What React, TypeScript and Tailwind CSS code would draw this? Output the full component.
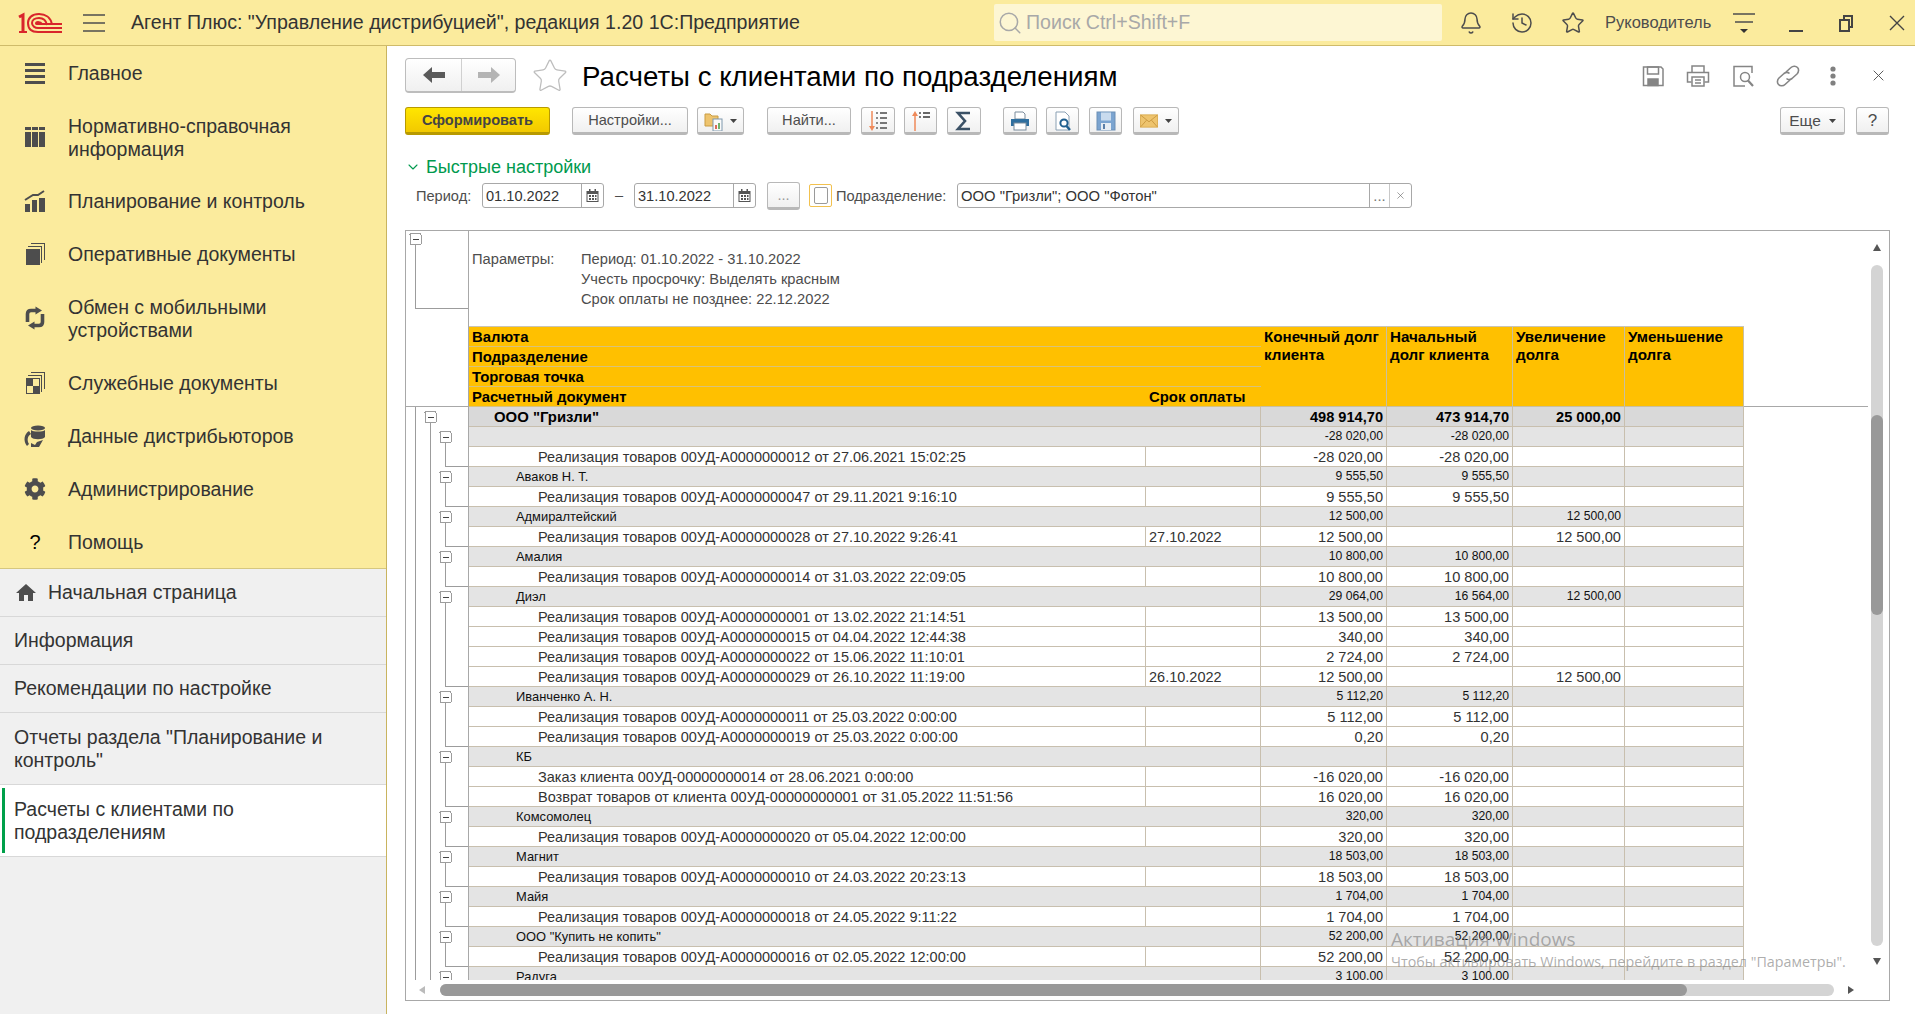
import { Bell, History, Star, Search, ChevronDown } from "lucide-react";
import { FaCog } from "react-icons/fa";
import { MdHome } from "react-icons/md";
import type { ReactNode } from "react";

// ─── Report rows: kind, name, due date, four amounts ─────────────────────────
type Row = [kind: "top" | "group" | "doc", name: string, date: string, end: string, start: string, inc: string, dec: string];

const real = (n: string, d: string) => `Реализация товаров 00УД-А00000000${n} от ${d}`;

const ROWS: Row[] = [
  ["top", 'ООО "Гризли"', "", "498 914,70", "473 914,70", "25 000,00", ""],
  ["group", "", "", "-28 020,00", "-28 020,00", "", ""],
  ["doc", real("12", "27.06.2021 15:02:25"), "", "-28 020,00", "-28 020,00", "", ""],
  ["group", "Аваков Н. Т.", "", "9 555,50", "9 555,50", "", ""],
  ["doc", real("47", "29.11.2021 9:16:10"), "", "9 555,50", "9 555,50", "", ""],
  ["group", "Адмиралтейский", "", "12 500,00", "", "12 500,00", ""],
  ["doc", real("28", "27.10.2022 9:26:41"), "27.10.2022", "12 500,00", "", "12 500,00", ""],
  ["group", "Амалия", "", "10 800,00", "10 800,00", "", ""],
  ["doc", real("14", "31.03.2022 22:09:05"), "", "10 800,00", "10 800,00", "", ""],
  ["group", "Диэл", "", "29 064,00", "16 564,00", "12 500,00", ""],
  ["doc", real("01", "13.02.2022 21:14:51"), "", "13 500,00", "13 500,00", "", ""],
  ["doc", real("15", "04.04.2022 12:44:38"), "", "340,00", "340,00", "", ""],
  ["doc", real("22", "15.06.2022 11:10:01"), "", "2 724,00", "2 724,00", "", ""],
  ["doc", real("29", "26.10.2022 11:19:00"), "26.10.2022", "12 500,00", "", "12 500,00", ""],
  ["group", "Иванченко А. Н.", "", "5 112,20", "5 112,20", "", ""],
  ["doc", real("11", "25.03.2022 0:00:00"), "", "5 112,00", "5 112,00", "", ""],
  ["doc", real("19", "25.03.2022 0:00:00"), "", "0,20", "0,20", "", ""],
  ["group", "КБ", "", "", "", "", ""],
  ["doc", "Заказ клиента 00УД-00000000014 от 28.06.2021 0:00:00", "", "-16 020,00", "-16 020,00", "", ""],
  ["doc", "Возврат товаров от клиента 00УД-00000000001 от 31.05.2022 11:51:56", "", "16 020,00", "16 020,00", "", ""],
  ["group", "Комсомолец", "", "320,00", "320,00", "", ""],
  ["doc", real("20", "05.04.2022 12:00:00"), "", "320,00", "320,00", "", ""],
  ["group", "Магнит", "", "18 503,00", "18 503,00", "", ""],
  ["doc", real("10", "24.03.2022 20:23:13"), "", "18 503,00", "18 503,00", "", ""],
  ["group", "Майя", "", "1 704,00", "1 704,00", "", ""],
  ["doc", real("18", "24.05.2022 9:11:22"), "", "1 704,00", "1 704,00", "", ""],
  ["group", 'ООО "Купить не копить"', "", "52 200,00", "52 200,00", "", ""],
  ["doc", real("16", "02.05.2022 12:00:00"), "", "52 200,00", "52 200,00", "", ""],
  ["group", "Радуга", "", "3 100,00", "3 100,00", "", ""],
];

// ─── Sidebar icons ───────────────────────────────────────────────────────────
const ICON = "#4d4d4d";

function IconMain() {
  return (
    <svg width="24" height="24" viewBox="0 0 24 24" fill={ICON}>
      <rect x="2" y="2" width="20" height="3" />
      <rect x="2" y="8" width="20" height="3" />
      <rect x="2" y="14" width="20" height="3" />
      <rect x="2" y="20" width="20" height="3" />
    </svg>
  );
}

function IconTable() {
  return (
    <svg width="24" height="24" viewBox="0 0 24 24" fill={ICON}>
      <rect x="2" y="2" width="6" height="3" />
      <rect x="9" y="2" width="6" height="3" />
      <rect x="16" y="2" width="6" height="3" />
      <rect x="2" y="7" width="6" height="15" />
      <rect x="9" y="7" width="6" height="15" />
      <rect x="16" y="7" width="6" height="15" />
    </svg>
  );
}

function IconPlan() {
  return (
    <svg width="24" height="24" viewBox="0 0 24 24" fill={ICON}>
      <rect x="2" y="15" width="5" height="8" />
      <rect x="9" y="11" width="5" height="12" />
      <rect x="16" y="9" width="6" height="14" />
      <path d="M2 11 L10 6 L15 6 L21 2" fill="none" stroke={ICON} strokeWidth="2" />
    </svg>
  );
}

function IconDocs({ square }: { square?: boolean }) {
  return (
    <svg width="24" height="24" viewBox="0 0 24 24" fill={ICON}>
      <path d="M8 1 H22 V18 H21 V2 H8 Z" />
      <path d="M5 4 H19 V21 H18 V5 H5 Z" />
      <rect x="3" y="7" width="14" height="16" />
      {square && <rect x="10" y="8" width="6" height="7" fill="#fbeb9d" />}
      {square && <rect x="4" y="15" width="6" height="7" fill="#fbeb9d" />}
    </svg>
  );
}

function IconExchange() {
  return (
    <svg width="24" height="24" viewBox="0 0 24 24" fill={ICON}>
      <path d="M4.5 16 V8 Q4.5 4.5 8 4.5 H13" fill="none" stroke={ICON} strokeWidth="3.6" />
      <path d="M12.5 0.5 L19 4.5 L12.5 8.5 Z" />
      <path d="M19.5 8 V16 Q19.5 19.5 16 19.5 H11" fill="none" stroke={ICON} strokeWidth="3.6" />
      <path d="M11.5 15.5 L5 19.5 L11.5 23.5 Z" />
    </svg>
  );
}

function IconDistrib() {
  return (
    <svg width="24" height="24" viewBox="0 0 24 24" fill={ICON}>
      <ellipse cx="15" cy="4" rx="7" ry="2.5" />
      <path d="M8 6 C10 8 20 8 22 6 V13 C20 16 10 16 8 13 Z" />
      <path d="M6 7 C1 10 0 17 4 22 L6 20 C4 17 4 12 8 10 Z" />
      <path d="M8 23 L16 23 L20 16 L14 18 L12 21 L8 19 Z" />
    </svg>
  );
}

// ─── Header and title row drawings ───────────────────────────────────────────
function Logo() {
  return (
    <svg width="44" height="22" viewBox="0 0 44 22" fill="none" stroke="#d9252b" strokeWidth="2">
      <path d="M1 5 L5 3 V20" strokeWidth="3" />
      <path d="M1 20 H9" strokeWidth="2" />
      <path d="M34 13 C33 5 27 2 21 2 C14 2 10 6 10 11 C10 17 14 20 20 20 H44" />
      <path d="M29 13 C28 8 25 6 21 6 C17 6 14 8 14 11 C14 14 17 16 20 16 H44" />
      <path d="M24 12 C23 10 22 10 20 10 C18 10 18 11 18 11.5 C18 12 19 12 20 12 H44" />
    </svg>
  );
}

function Hamburger() {
  return (
    <svg width="22" height="18" viewBox="0 0 22 18" stroke="#4d4d4d" strokeWidth="1.5">
      <path d="M0 1 H22 M0 9 H22 M0 17 H22" />
    </svg>
  );
}

function FunctionsMenu() {
  return (
    <svg width="24" height="24" viewBox="0 0 24 24" stroke="#4d4d4d" strokeWidth="1.5">
      <path d="M1 3 H23 M3 11 H21" />
      <path d="M8 18 H16 L12 22 Z" fill="#333" stroke="none" />
    </svg>
  );
}

function WindowMin() {
  return (
    <svg width="16" height="24" viewBox="0 0 16 24">
      <rect x="1" y="19" width="14" height="2" fill="#444" />
    </svg>
  );
}

function WindowRestore() {
  return (
    <svg width="16" height="24" viewBox="0 0 16 24" fill="none" stroke="#444" strokeWidth="2">
      <rect x="2" y="9" width="9" height="11" />
      <path d="M6 9 V5 H14 V16 H11" />
    </svg>
  );
}

function WindowClose({ size = 16, color = "#444" }: { size?: number; color?: string }) {
  return (
    <svg width={size} height={size} viewBox="0 0 16 16" stroke={color} strokeWidth="1.4">
      <path d="M1 1 L15 15 M15 1 L1 15" />
    </svg>
  );
}

function GraySave() {
  return (
    <svg width="24" height="24" viewBox="0 0 24 24" fill="none" stroke="#858585" strokeWidth="1.5">
      <path d="M2.5 3 H20 L22 5 V21.5 H2.5 Z" />
      <rect x="6.5" y="3" width="11" height="7" />
      <rect x="7" y="15" width="10" height="6.5" fill="#858585" />
    </svg>
  );
}

function GrayPrint() {
  return (
    <svg width="24" height="24" viewBox="0 0 24 24" fill="none" stroke="#858585" strokeWidth="1.5">
      <path d="M6 8 V2 H18 V8" />
      <path d="M5.5 18 H1.5 V8.5 H22.5 V18 H18.5" />
      <rect x="6" y="13" width="12" height="9" />
      <path d="M9 16 H15 M9 19 H15" />
    </svg>
  );
}

function GrayPreview() {
  return (
    <svg width="24" height="24" viewBox="0 0 24 24" fill="none" stroke="#858585" strokeWidth="1.5">
      <path d="M21 9 V2.5 H3 V22 H14" />
      <circle cx="14" cy="13" r="4.5" />
      <path d="M17 16.5 L22 22" strokeWidth="2.2" />
    </svg>
  );
}

function GrayLink() {
  return (
    <svg width="24" height="24" viewBox="0 0 24 24" fill="none" stroke="#858585" strokeWidth="1.6">
      <path d="M10 8 L15 3.5 C17 1.5 20 2 21.5 3.5 C23 5 23 8 21 10 L16 14.5 C14 16 12 16 10.5 14.5" />
      <path d="M14 16 L9 20.5 C7 22.5 4 22 2.5 20.5 C1 19 1 16 3 14 L8 9.5 C10 8 12 8 13.5 9.5" />
    </svg>
  );
}

function GrayDots() {
  return (
    <svg width="24" height="24" viewBox="0 0 24 24" fill="#808080">
      <circle cx="12" cy="5" r="2.6" />
      <circle cx="12" cy="12" r="2.6" />
      <circle cx="12" cy="19" r="2.6" />
    </svg>
  );
}

function NavArrow({ dir, color }: { dir: "left" | "right"; color: string }) {
  return (
    <svg width="22" height="16" viewBox="0 0 22 16" fill={color}>
      {dir === "left" ? <path d="M0 8 L9 0 V5 H22 V11 H9 V16 Z" /> : <path d="M22 8 L13 0 V5 H0 V11 H13 V16 Z" />}
    </svg>
  );
}

// ─── Toolbar drawings ────────────────────────────────────────────────────────
function DropCaret() {
  return (
    <svg width="7" height="4" viewBox="0 0 7 4" fill="#444">
      <path d="M0 0 H7 L3.5 4 Z" />
    </svg>
  );
}

function ToolFolder() {
  return (
    <svg width="20" height="20" viewBox="0 0 20 20">
      <path d="M1 3 H6 L8 5 H14 V15 H1 Z" fill="#eec46e" stroke="#c99c43" />
      <rect x="9" y="8" width="9" height="12" fill="#fafafa" stroke="#7f98ad" />
      <rect x="11" y="14" width="2" height="4" fill="#d96a5a" />
      <rect x="14" y="12" width="2" height="6" fill="#6fb36f" />
    </svg>
  );
}

function ToolSortDown() {
  return (
    <svg width="20" height="22" viewBox="0 0 20 22" fill="none">
      <path d="M4 1 V19" stroke="#ef8a5a" strokeWidth="1.5" />
      <path d="M1 16 L4 21 L7 16 Z" fill="#ef8a5a" />
      <path d="M8 3 H10 M8 8 H10 M8 13 H10 M8 18 H10" stroke="#8a8a8a" strokeWidth="2" />
      <path d="M12 3 H19 M12 8 H19 M12 13 H19 M12 18 H19" stroke="#777" strokeWidth="2" />
    </svg>
  );
}

function ToolSortUp() {
  return (
    <svg width="20" height="22" viewBox="0 0 20 22" fill="none">
      <path d="M4 3 V21" stroke="#ef8a5a" strokeWidth="1.5" />
      <path d="M1 6 L4 1 L7 6 Z" fill="#ef8a5a" />
      <path d="M8 3 H10 M8 7 H10" stroke="#777" strokeWidth="2" />
      <path d="M12 3 H19 M12 7 H19" stroke="#666" strokeWidth="2" />
    </svg>
  );
}

function ToolSigma() {
  return (
    <svg width="18" height="22" viewBox="0 0 18 22" fill="none" stroke="#3b5166" strokeWidth="2.6">
      <path d="M15 3 H3 L10 11 L3 19 H15" />
    </svg>
  );
}

function ToolPrint() {
  return (
    <svg width="20" height="20" viewBox="0 0 20 20">
      <path d="M5 1 H13 L15 3 V8 H5 Z" fill="#fff" stroke="#7a8c9c" />
      <path d="M1 8 H19 V15 H1 Z" fill="#2f6f9f" />
      <rect x="4" y="12" width="12" height="7" fill="#fff" stroke="#7a8c9c" />
    </svg>
  );
}

function ToolPreview() {
  return (
    <svg width="20" height="20" viewBox="0 0 20 20">
      <path d="M3 1 H12 L16 5 V19 H3 Z" fill="#fff" stroke="#8aa0b3" />
      <circle cx="11" cy="12" r="3.6" fill="none" stroke="#1f5f8f" strokeWidth="2" />
      <path d="M13.5 15 L17 19" stroke="#1f5f8f" strokeWidth="2.4" />
    </svg>
  );
}

function ToolSave() {
  return (
    <svg width="20" height="20" viewBox="0 0 20 20">
      <rect x="1" y="1" width="18" height="18" fill="#7ba4d0" stroke="#6d8fb5" />
      <rect x="5" y="1.5" width="10" height="8" fill="#c9dbee" />
      <rect x="5" y="12" width="10" height="7" fill="#e7edf3" />
      <rect x="7" y="13" width="2" height="5" fill="#5b7fa8" />
    </svg>
  );
}

function ToolMail() {
  return (
    <svg width="18" height="14" viewBox="0 0 22 16">
      <rect x="0.5" y="0.5" width="21" height="15" fill="#eec46e" stroke="#d8a848" />
      <path d="M1 1 L11 9 L21 1 M1 15 L8 7 M21 15 L14 7" fill="none" stroke="#c4923a" />
    </svg>
  );
}

function Calendar() {
  return (
    <svg width="13" height="13" viewBox="0 0 13 13" fill="#555">
      <path d="M3 0 H4.5 V2 H8.5 V0 H10 V2 H12.5 V13 H0.5 V2 H3 Z M1.5 5 V12 H11.5 V5 Z" />
      <path d="M3 6 H5 V8 H3 Z M6 6 H8 V8 H6 Z M9 6 H10.5 V8 H9 Z M3 9 H5 V11 H3 Z M6 9 H8 V11 H6 Z M9 9 H10.5 V11 H9 Z" />
    </svg>
  );
}

// ─── Small pieces ────────────────────────────────────────────────────────────
function NavItem({ icon, children, className }: { icon: ReactNode; children: ReactNode; className: string }) {
  return (
    <div className={`flex items-center pl-[23px] ${className}`}>
      <div className="w-6 h-6 flex items-center justify-center shrink-0">{icon}</div>
      <div className="ml-[21px] pt-[2px] text-[19.5px] leading-[23px] text-[#333]">{children}</div>
    </div>
  );
}

function Btn({ className, children }: { className: string; children: ReactNode }) {
  return (
    <div
      className={`h-[28px] flex items-center justify-center shrink-0 rounded-[3px] border border-[#b8b8b8] border-b-[3px] bg-linear-to-b from-white to-[#f0f0f0] pt-[2px] text-[14.6px] text-[#4d4d4d] ${className}`}
    >
      {children}
    </div>
  );
}

function DateInput({ value }: { value: string }) {
  return (
    <div className="w-[122px] h-[25px] flex rounded-[3px] border border-[#a8a8a8] bg-white shrink-0">
      <div className="w-[99px] border-r border-[#a8a8a8] pl-[3px] text-[14.6px] leading-[24px] text-[#333]">{value}</div>
      <div className="flex-1 flex items-center justify-center">
        <Calendar />
      </div>
    </div>
  );
}

function TreeBox({ x }: { x: number }) {
  return (
    <>
      <rect x={x - 5.5} y="4.5" width="11" height="11" rx="1" fill="#fff" stroke="#9c9c9c" />
      <path d={`M${x - 3} 10 H${x + 3}`} stroke="#444" strokeWidth="1" />
    </>
  );
}

function TreeGutter({ kind, last }: { kind: Row[0]; last: boolean }) {
  return (
    <div className="w-[63px] h-5 border-r border-[#a8a8a8] shrink-0">
      <svg width="62" height="20" viewBox="0 0 62 20" fill="none" stroke="#9c9c9c" shapeRendering="crispEdges">
        <path d="M9.5 0 V20" />
        {kind === "top" && (
          <>
            <path d="M24.5 15 V20" />
            <TreeBox x={24.5} />
          </>
        )}
        {kind !== "top" && <path d="M24.5 0 V20" />}
        {kind === "group" && (
          <>
            <path d="M39.5 15 V20" />
            <TreeBox x={39.5} />
          </>
        )}
        {kind === "doc" && <path d={last ? "M39.5 0 V19.5 H62" : "M39.5 0 V20"} />}
      </svg>
    </div>
  );
}

function ReportRow({ row, last }: { row: Row; last: boolean }) {
  const [kind, name, date, end, start, inc, dec] = row;
  const bg = kind === "top" ? "bg-[#d9d9d9]" : kind === "group" ? "bg-[#e4e4e4]" : "bg-white";
  const nameText =
    kind === "top"
      ? "text-[14.9px] font-bold text-black leading-[21px]"
      : kind === "group"
        ? "text-[12.9px] text-[#111] leading-[19px]"
        : "text-[14.5px] text-[#333] leading-[21px]";
  const numText =
    kind === "top"
      ? "text-[14.6px] font-bold text-black leading-[21px]"
      : kind === "group"
        ? "text-[12.2px] text-[#111] leading-[19px]"
        : "text-[14.6px] text-[#333] leading-[21px]";
  const cell = `h-5 border-b border-r border-[#c8bfae] overflow-hidden whitespace-nowrap ${bg}`;
  const pad = kind === "top" ? "pl-[25px]" : kind === "group" ? "pl-[47px]" : "pl-[69px]";
  const num = `${cell} ${numText} text-right pr-[3px]`;

  return (
    <div className="flex">
      <TreeGutter kind={kind} last={last} />
      <div className="grid grid-cols-[677px_115px_126px_126px_112px_119px]">
        {kind === "doc" ? (
          <>
            <div className={`${cell} ${nameText} ${pad}`}>{name}</div>
            <div className={`${cell} ${nameText} pl-[3px]`}>{date}</div>
          </>
        ) : (
          <div className={`${cell} ${nameText} ${pad} col-span-2`}>{name}</div>
        )}
        <div className={num}>{end}</div>
        <div className={num}>{start}</div>
        <div className={num}>{inc}</div>
        <div className={num}>{dec}</div>
      </div>
    </div>
  );
}

function ReportHeader() {
  const strip = "h-5 pl-[3px] bg-[#ffc000] border-b border-[#d8c27a] text-[14.9px] font-bold leading-[21px] text-black";
  const col = "row-span-4 bg-[#ffc000] border-r border-b border-[#c9bf9f] pl-[3px] pt-[1px] text-[15.2px] font-bold leading-[18px] text-black";
  return (
    <div className="flex border-b border-[#a8a8a8] h-20">
      <div className="w-[63px] border-r border-[#a8a8a8] shrink-0" />
      <div className="grid grid-cols-[677px_115px_126px_126px_112px_119px] grid-rows-[20px_20px_20px_20px] h-20 border-t border-[#c9c4b4] -mt-px">
        <div className={`${strip} col-span-2 col-start-1 row-start-1`}>Валюта</div>
        <div className={`${strip} col-span-2 col-start-1 row-start-2`}>Подразделение</div>
        <div className={`${strip} col-span-2 col-start-1 row-start-3`}>Торговая точка</div>
        <div className={`${strip} col-start-1 row-start-4`}>Расчетный документ</div>
        <div className={`${strip} col-start-2 row-start-4`}>Срок оплаты</div>
        <div className={`${col} col-start-3 row-start-1`}>Конечный долг клиента</div>
        <div className={`${col} col-start-4 row-start-1`}>Начальный долг клиента</div>
        <div className={`${col} col-start-5 row-start-1`}>Увеличение долга</div>
        <div className={`${col} col-start-6 row-start-1`}>Уменьшение долга</div>
      </div>
    </div>
  );
}

export default function App() {
  return (
    <div className="h-screen w-[1915px] overflow-hidden flex flex-col bg-white font-['Liberation_Sans',Arial,sans-serif]">
      {/* ── Top bar ── */}
      <header className="h-[46px] shrink-0 flex items-center bg-[#fbeb9d] border-b border-[#cfbb6a] pl-[18px]">
        <Logo />
        <div className="ml-[21px]">
          <Hamburger />
        </div>
        <div className="ml-[26px] w-[863px] text-[19.6px] text-[#333] whitespace-nowrap">
          Агент Плюс: "Управление дистрибуцией", редакция 1.20 1С:Предприятие
        </div>
        <div className="w-[448px] h-[37px] flex items-center rounded-[2px] bg-[#fdf6d3] pl-[3px]">
          <Search size={26} strokeWidth={1.4} color="#a8a8a8" />
          <span className="ml-[3px] text-[19.6px] text-[#a8a8a8]">Поиск Ctrl+Shift+F</span>
        </div>
        <Bell className="ml-[17px]" size={24} strokeWidth={1.5} color="#4d4d4d" />
        <History className="ml-[27px]" size={24} strokeWidth={1.5} color="#4d4d4d" />
        <Star className="ml-[27px]" size={24} strokeWidth={1.5} color="#4d4d4d" />
        <span className="ml-[20px] w-[108px] text-[16.5px] text-[#4d4d4d] whitespace-nowrap">Руководитель</span>
        <div className="ml-[19px]">
          <FunctionsMenu />
        </div>
        <div className="ml-[32px]">
          <WindowMin />
        </div>
        <div className="ml-[34px]">
          <WindowRestore />
        </div>
        <div className="ml-[35px]">
          <WindowClose />
        </div>
      </header>

      <div className="flex-1 flex min-h-0">
        {/* ── Sections panel ── */}
        <aside className="w-[387px] shrink-0 flex flex-col border-r border-[#c9b45f] bg-[#f0f0f0]">
          <nav className="h-[523px] shrink-0 bg-[#fbeb9d] border-b border-[#d6c77f]">
            <NavItem className="h-[53px]" icon={<IconMain />}>
              Главное
            </NavItem>
            <NavItem className="h-[75px]" icon={<IconTable />}>
              Нормативно-справочная
              <br />
              информация
            </NavItem>
            <NavItem className="h-[53px]" icon={<IconPlan />}>
              Планирование и контроль
            </NavItem>
            <NavItem className="h-[53px]" icon={<IconDocs />}>
              Оперативные документы
            </NavItem>
            <NavItem className="h-[76px]" icon={<IconExchange />}>
              Обмен с мобильными
              <br />
              устройствами
            </NavItem>
            <NavItem className="h-[53px]" icon={<IconDocs square />}>
              Служебные документы
            </NavItem>
            <NavItem className="h-[53px]" icon={<IconDistrib />}>
              Данные дистрибьюторов
            </NavItem>
            <NavItem className="h-[53px]" icon={<FaCog size={22} color={ICON} />}>
              Администрирование
            </NavItem>
            <NavItem className="h-[53px]" icon={<span className="text-[20px] text-black">?</span>}>
              Помощь
            </NavItem>
          </nav>
          <div className="h-12 flex items-center pl-[14px] pt-px border-b border-[#d8d8d8] text-[19.5px] text-[#333]">
            <MdHome size={24} color={ICON} />
            <span className="ml-[10px]">Начальная страница</span>
          </div>
          <div className="h-12 flex items-center pl-[14px] pt-px border-b border-[#d8d8d8] text-[19.5px] text-[#333]">Информация</div>
          <div className="h-12 flex items-center pl-[14px] pt-px border-b border-[#d8d8d8] text-[19.5px] text-[#333]">Рекомендации по настройке</div>
          <div className="h-[72px] flex items-center pl-[14px] border-b border-[#d8d8d8] text-[19.5px] leading-[23px] text-[#333]">
            <span>
              Отчеты раздела "Планирование и
              <br />
              контроль"
            </span>
          </div>
          <div className="h-[72px] flex items-center bg-white pl-[2px] border-b border-[#d8d8d8] text-[19.5px] leading-[23px] text-[#333]">
            <div className="w-[3px] h-[65px] bg-[#00a04a]" />
            <span className="ml-[9px]">
              Расчеты с клиентами по
              <br />
              подразделениям
            </span>
          </div>
        </aside>

        {/* ── Form ── */}
        <main className="flex-1 min-w-0 flex flex-col pl-[18px] pr-[25px] pt-3 pb-[13px]">
          <div className="h-[35px] shrink-0 flex items-center">
            <div className="w-[111px] h-[35px] flex rounded-[4px] border border-[#bdbdbd] border-b-2 bg-linear-to-b from-white to-[#f0f0f0]">
              <div className="w-[56px] border-r border-[#d0d0d0] flex items-center justify-center">
                <NavArrow dir="left" color="#5a5a5a" />
              </div>
              <div className="flex-1 flex items-center justify-center">
                <NavArrow dir="right" color="#b4b4b4" />
              </div>
            </div>
            <Star className="ml-[15px]" size={38} strokeWidth={0.8} color="#bdbdbd" />
            <h1 className="ml-[13px] pt-[2px] text-[27.7px] text-black whitespace-nowrap">Расчеты с клиентами по подразделениям</h1>
            <div className="ml-auto flex items-center gap-[21px]">
              <GraySave />
              <GrayPrint />
              <GrayPreview />
              <GrayLink />
              <GrayDots />
              <div className="w-6 flex justify-center">
                <WindowClose size={11} color="#555" />
              </div>
            </div>
          </div>

          {/* ── Command bar ── */}
          <div className="mt-[14px] h-[28px] shrink-0 flex items-center pr-px">
            <div className="w-[145px] h-[28px] flex items-center justify-center rounded-[3px] border border-[#b89a00] border-b-[3px] bg-linear-to-b from-[#ffe600] to-[#f2c900] pt-[2px] text-[14.6px] font-bold text-[#444]">
              Сформировать
            </div>
            <Btn className="ml-[22px] w-[116px]">Настройки...</Btn>
            <Btn className="ml-[9px] w-[47px] gap-[6px]">
              <ToolFolder />
              <DropCaret />
            </Btn>
            <Btn className="ml-[23px] w-[84px]">Найти...</Btn>
            <Btn className="ml-[10px] w-[34px]">
              <ToolSortDown />
            </Btn>
            <Btn className="ml-[9px] w-[33px]">
              <ToolSortUp />
            </Btn>
            <Btn className="ml-[10px] w-[34px]">
              <ToolSigma />
            </Btn>
            <Btn className="ml-[22px] w-[34px]">
              <ToolPrint />
            </Btn>
            <Btn className="ml-[9px] w-[33px]">
              <ToolPreview />
            </Btn>
            <Btn className="ml-[10px] w-[33px]">
              <ToolSave />
            </Btn>
            <Btn className="ml-[11px] w-[46px] gap-[7px]">
              <ToolMail />
              <DropCaret />
            </Btn>
            <Btn className="ml-auto w-[65px] gap-[8px] text-[15.5px]">
              Еще
              <DropCaret />
            </Btn>
            <Btn className="ml-[11px] w-[33px] text-[17px]">?</Btn>
          </div>

          {/* ── Quick settings ── */}
          <div className="mt-[22px] h-5 shrink-0 flex items-center text-[#009a4e]">
            <ChevronDown size={16} strokeWidth={1.6} />
            <span className="ml-[5px] text-[18px]">Быстрые настройки</span>
          </div>
          <div className="mt-[6px] h-[25px] shrink-0 flex items-center text-[14.6px] text-[#4d4d4d]">
            <span className="ml-[11px] w-[66px] pt-[2px]">Период:</span>
            <DateInput value="01.10.2022" />
            <span className="w-[30px] text-center">–</span>
            <DateInput value="31.10.2022" />
            <Btn className="ml-[11px] w-[33px] text-[#999]">...</Btn>
            <div className="ml-[9px] w-[23px] h-[23px] flex items-center justify-center border border-[#f2c14e] rounded-[2px]">
              <div className="w-[14px] h-[17px] border border-[#9a9a9a] rounded-[2px] bg-white" />
            </div>
            <span className="ml-[4px] w-[121px] pt-[2px] whitespace-nowrap">Подразделение:</span>
            <div className="w-[455px] h-[25px] flex rounded-[3px] border border-[#a8a8a8] bg-white text-[14.8px] text-[#333]">
              <div className="w-[412px] pl-[3px] leading-[24px] border-r border-[#a8a8a8]">ООО "Гризли"; ООО "Фотон"</div>
              <div className="w-[20px] border-r border-[#c8c8c8] text-center leading-[24px] text-[#777]">...</div>
              <div className="flex-1 flex items-center justify-center">
                <WindowClose size={7} color="#666" />
              </div>
            </div>
          </div>

          {/* ── Report frame ── */}
          <section className="relative mt-[22px] flex-1 min-h-0 flex border border-[#a8a8a8]">
            <div className="w-[1462px] flex flex-col">
              <div className="flex-1 min-h-0 overflow-hidden">
                <div className="flex h-[96px]">
                  <div className="w-[63px] border-r border-[#a8a8a8] shrink-0">
                    <svg width="62" height="96" viewBox="0 0 62 96" fill="none" stroke="#9c9c9c" shapeRendering="crispEdges">
                      <path d="M9.5 14 V77.5 H62" />
                      <rect x="4" y="2.5" width="11" height="11" rx="1" fill="#fff" />
                      <path d="M6.5 8 H12.5" stroke="#444" />
                    </svg>
                  </div>
                  <div className="flex pl-[3px] pt-[18px] text-[14.7px] leading-5 text-[#4d4d4d]">
                    <div className="w-[109px]">Параметры:</div>
                    <div>
                      Период: 01.10.2022 - 31.10.2022
                      <br />
                      Учесть просрочку: Выделять красным
                      <br />
                      Срок оплаты не позднее: 22.12.2022
                    </div>
                  </div>
                </div>
                <ReportHeader />
                {ROWS.map((row, i) => (
                  <ReportRow key={i} row={row} last={row[0] === "doc" && ROWS[i + 1]?.[0] !== "doc"} />
                ))}
              </div>
              {/* horizontal scrollbar */}
              <div className="h-5 shrink-0 flex items-center pl-[13px]">
                <svg width="6" height="8" viewBox="0 0 6 8" fill="#bbb">
                  <path d="M6 0 V8 L0 4 Z" />
                </svg>
                <div className="ml-[15px] w-[1394px] h-3 rounded-full bg-[#d4d4d4]">
                  <div className="w-[1247px] h-3 rounded-full bg-[#999]" />
                </div>
                <svg className="ml-[14px]" width="6" height="8" viewBox="0 0 6 8" fill="#555">
                  <path d="M0 0 V8 L6 4 Z" />
                </svg>
              </div>
            </div>

            {/* vertical scrollbar */}
            <div className="flex-1 flex flex-col items-center pt-3">
              <svg width="8" height="8" viewBox="0 0 8 8" fill="#555" className="mr-[3px]">
                <path d="M0 8 H8 L4 1 Z" />
              </svg>
              <div className="mt-[14px] w-3 h-[681px] rounded-full bg-[#d4d4d4] pt-[150px] mr-[3px]">
                <div className="h-[200px] rounded-full bg-[#999]" />
              </div>
              <svg width="8" height="8" viewBox="0 0 8 8" fill="#555" className="mt-3 mr-[3px]">
                <path d="M0 0 H8 L4 7 Z" />
              </svg>
            </div>

            {/* Windows activation watermark */}
            <div className="absolute left-[985px] top-[695px] pointer-events-none font-['Open_Sans',sans-serif] text-[#8a8a8a]/70">
              <div className="text-[19px] leading-[26px]">Активация Windows</div>
              <div className="text-[14.3px] leading-[20px] whitespace-nowrap">Чтобы активировать Windows, перейдите в раздел "Параметры".</div>
            </div>
          </section>
        </main>
      </div>
    </div>
  );
}
